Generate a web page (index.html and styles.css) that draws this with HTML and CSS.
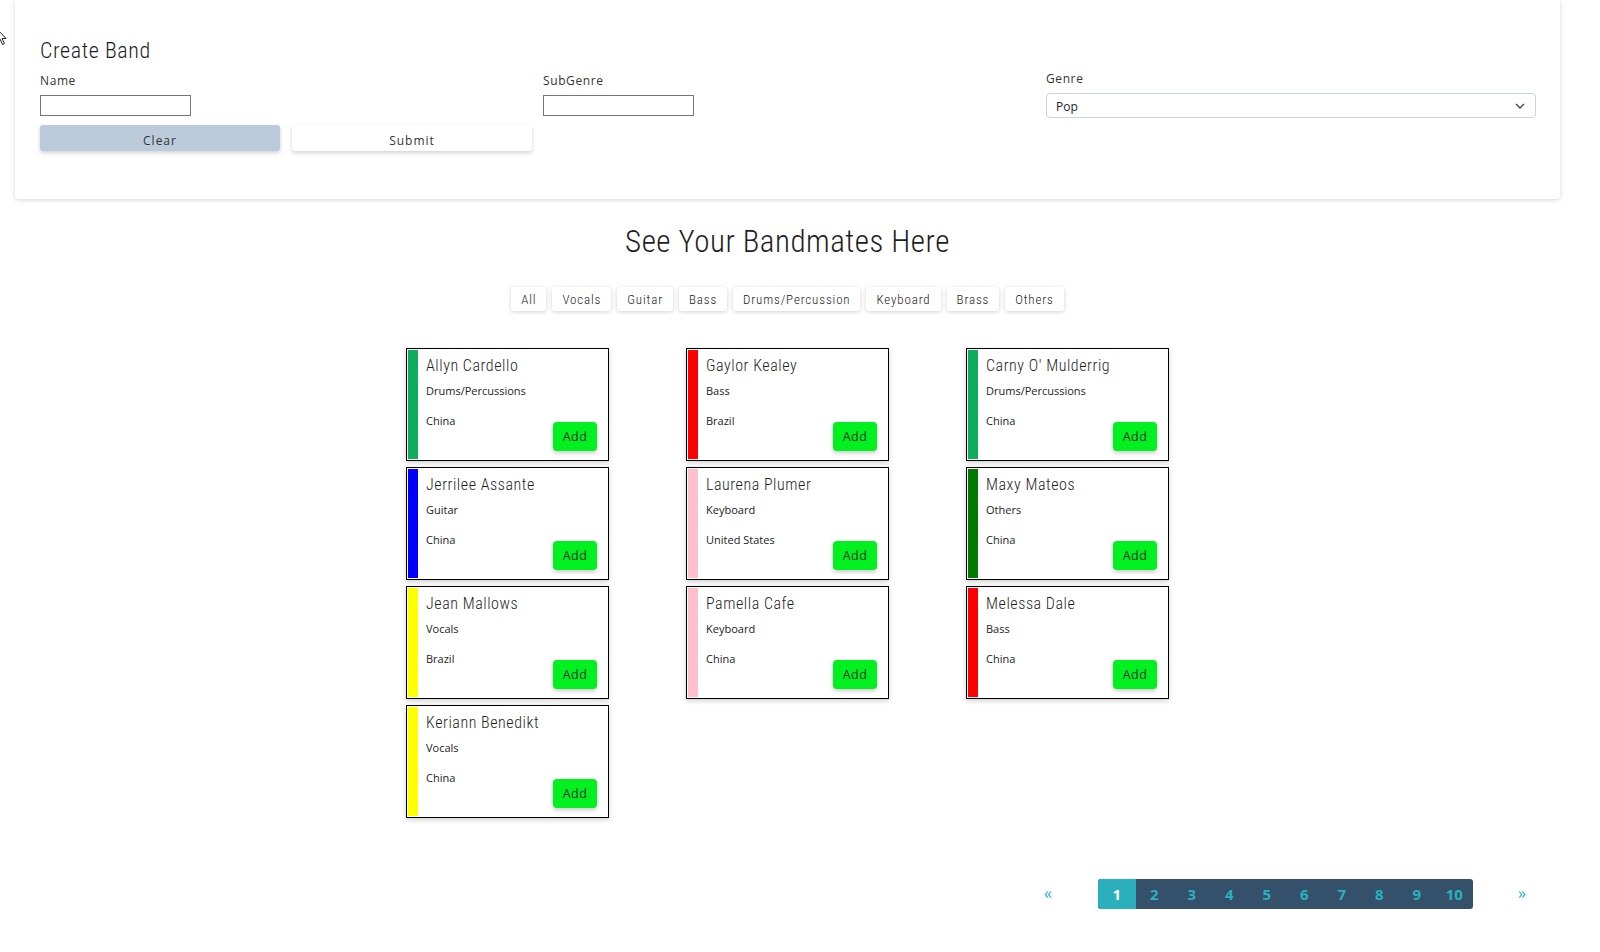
FILE: index.html
```html
<!DOCTYPE html>
<html lang="en">
<head>
<meta charset="utf-8">
<title>Create Band</title>
<link rel="stylesheet" href="styles.css">
</head>
<body>
<svg class="cursor" width="12" height="18" viewBox="0 0 12 18"><path d="M1 1 L1 14 L4 11 L6.5 16.5 L8.5 15.5 L6 10.5 L10 10.5 Z" fill="#fff" stroke="#222" stroke-width="1"/></svg>
<section class="panel">
  <h2 class="panel-title">Create Band</h2>
  <div class="form-grid">
    <div class="field">
      <label class="label">Name</label>
      <input class="text-input" type="text">
      <div class="actions">
        <button class="btn btn-clear">Clear</button>
        <button class="btn btn-submit">Submit</button>
      </div>
    </div>
    <div class="field">
      <label class="label">SubGenre</label>
      <input class="text-input" type="text">
    </div>
    <div class="field field-genre">
      <label class="label">Genre</label>
      <div class="select">
        <span>Pop</span>
        <svg width="10" height="6" viewBox="0 0 10 6"><path d="M1 1 L5 5 L9 1" fill="none" stroke="#444" stroke-width="1.3"/></svg>
      </div>
    </div>
  </div>
</section>

<main class="main">
  <h1 class="heading">See Your Bandmates Here</h1>
  <div class="filters">
    <button class="filter">All</button>
    <button class="filter">Vocals</button>
    <button class="filter">Guitar</button>
    <button class="filter">Bass</button>
    <button class="filter">Drums/Percussion</button>
    <button class="filter">Keyboard</button>
    <button class="filter">Brass</button>
    <button class="filter">Others</button>
  </div>

  <div class="cards">
    <div class="card"><div class="bar c-green"></div><div class="card-body"><div class="name">Allyn Cardello</div><div class="inst">Drums/Percussions</div><div class="bottom"><span class="country">China</span><button class="add">Add</button></div></div></div>
    <div class="card"><div class="bar c-red"></div><div class="card-body"><div class="name">Gaylor Kealey</div><div class="inst">Bass</div><div class="bottom"><span class="country">Brazil</span><button class="add">Add</button></div></div></div>
    <div class="card"><div class="bar c-green"></div><div class="card-body"><div class="name">Carny O' Mulderrig</div><div class="inst">Drums/Percussions</div><div class="bottom"><span class="country">China</span><button class="add">Add</button></div></div></div>

    <div class="card"><div class="bar c-blue"></div><div class="card-body"><div class="name">Jerrilee Assante</div><div class="inst">Guitar</div><div class="bottom"><span class="country">China</span><button class="add">Add</button></div></div></div>
    <div class="card"><div class="bar c-pink"></div><div class="card-body"><div class="name">Laurena Plumer</div><div class="inst">Keyboard</div><div class="bottom"><span class="country">United States</span><button class="add">Add</button></div></div></div>
    <div class="card"><div class="bar c-dkgreen"></div><div class="card-body"><div class="name">Maxy Mateos</div><div class="inst">Others</div><div class="bottom"><span class="country">China</span><button class="add">Add</button></div></div></div>

    <div class="card"><div class="bar c-yellow"></div><div class="card-body"><div class="name">Jean Mallows</div><div class="inst">Vocals</div><div class="bottom"><span class="country">Brazil</span><button class="add">Add</button></div></div></div>
    <div class="card"><div class="bar c-pink"></div><div class="card-body"><div class="name">Pamella Cafe</div><div class="inst">Keyboard</div><div class="bottom"><span class="country">China</span><button class="add">Add</button></div></div></div>
    <div class="card"><div class="bar c-red"></div><div class="card-body"><div class="name">Melessa Dale</div><div class="inst">Bass</div><div class="bottom"><span class="country">China</span><button class="add">Add</button></div></div></div>

    <div class="card"><div class="bar c-yellow"></div><div class="card-body"><div class="name">Keriann Benedikt</div><div class="inst">Vocals</div><div class="bottom"><span class="country">China</span><button class="add">Add</button></div></div></div>
  </div>

  <nav class="pager">
    <span class="pg-arrow">&laquo;</span>
    <div class="pg-box">
      <span class="pg active">1</span>
      <span class="pg">2</span>
      <span class="pg">3</span>
      <span class="pg">4</span>
      <span class="pg">5</span>
      <span class="pg">6</span>
      <span class="pg">7</span>
      <span class="pg">8</span>
      <span class="pg">9</span>
      <span class="pg">10</span>
    </div>
    <span class="pg-arrow">&raquo;</span>
  </nav>
</main>
</body>
</html>
```

FILE: styles.css
```css
* { box-sizing: border-box; }

body {
  margin: 0;
  background: #fff;
  font-family: "Open Sans", "Noto Sans", sans-serif;
  color: #212529;
  position: relative;
}

.cursor {
  position: absolute;
  left: -4px;
  top: 28px;
}

.panel {
  margin: 0 40px 0 15px;
  height: 199px;
  padding: 38px 24px 0 25px;
  background: #fff;
  border-radius: 0 0 4px 4px;
  box-shadow: 0 1px 5px rgba(0, 0, 0, 0.16);
}

.panel-title {
  margin: 0;
  font-family: "Roboto Condensed", "Liberation Sans Narrow", "DejaVu Sans Condensed", sans-serif;
  font-weight: 300;
  font-size: 22px;
  line-height: 26px;
  letter-spacing: 0.6px;
  color: #1e1e1e;
}

.form-grid {
  display: grid;
  grid-template-columns: 503px 503px 490px;
  margin-top: 9px;
  align-items: start;
}

.field {
  display: flex;
  flex-direction: column;
  align-items: flex-start;
}

.field-genre { margin-top: -2px; }

.label {
  font-size: 12px;
  line-height: 16px;
  letter-spacing: 0.6px;
  color: #333;
}

.text-input {
  margin-top: 6px;
  width: 151px;
  height: 21px;
  border: 1px solid #767676;
  border-radius: 0;
  padding: 0 4px;
  background: #fff;
}

.actions {
  margin-top: 9px;
  display: flex;
  gap: 12px;
}

.btn {
  width: 240px;
  height: 26px;
  border: 0;
  border-radius: 3px;
  font-family: "Open Sans", sans-serif;
  font-size: 12px;
  letter-spacing: 1px;
  color: #333;
  padding: 4px 0 0;
  box-shadow: 0 2px 4px rgba(0, 0, 0, 0.18);
}

.btn-clear { background: #bccbdb; }
.btn-submit { background: #fff; }

.select {
  margin-top: 6px;
  width: 490px;
  height: 25px;
  border: 1px solid #ced4da;
  border-radius: 4px;
  display: flex;
  align-items: center;
  justify-content: space-between;
  padding: 1px 10px 0 9px;
  font-size: 12px;
  color: #212529;
}

.main {
  margin: 0 40px 0 15px;
  padding-top: 23px;
  display: flex;
  flex-direction: column;
  align-items: center;
}

.heading {
  margin: 0;
  font-family: "Roboto Condensed", "Liberation Sans Narrow", "DejaVu Sans Condensed", sans-serif;
  font-weight: 300;
  font-size: 31px;
  line-height: 40px;
  letter-spacing: 0.5px;
  color: #1e1e1e;
}

.filters {
  margin-top: 25px;
  display: flex;
  gap: 6px;
}

.filter {
  height: 24px;
  padding: 0 10px;
  border: 0;
  border-radius: 3px;
  background: #fff;
  box-shadow: 0 1px 4px rgba(0, 0, 0, 0.18);
  font-family: "Roboto Condensed", "Liberation Sans Narrow", "DejaVu Sans Condensed", sans-serif;
  font-weight: 300;
  font-size: 13px;
  letter-spacing: 0.85px;
  color: #222;
}

.cards {
  margin-top: 37px;
  display: grid;
  grid-template-columns: repeat(3, 203px);
  column-gap: 77px;
  row-gap: 6px;
}

.card {
  height: 113px;
  border: 1px solid #000;
  padding: 1px;
  display: flex;
  background: #fff;
  box-shadow: 0 2px 5px rgba(0, 0, 0, 0.18);
}

.bar { width: 10px; flex: none; }
.c-green { background: #10ac5e; }
.c-red { background: #ff0000; }
.c-blue { background: #0000ff; }
.c-yellow { background: #ffff00; }
.c-pink { background: #ffc0cb; }
.c-dkgreen { background: #007a00; }

.card-body {
  flex: 1;
  padding: 6px 10px 0 8px;
  display: flex;
  flex-direction: column;
}

.name {
  font-family: "Roboto Condensed", "Liberation Sans Narrow", "DejaVu Sans Condensed", sans-serif;
  font-weight: 300;
  font-size: 16px;
  line-height: 20px;
  letter-spacing: 0.55px;
  color: #1e1e1e;
}

.inst {
  margin-top: 7px;
  font-size: 11px;
  line-height: 16px;
  color: #222;
}

.bottom {
  margin-top: 14px;
  display: flex;
  justify-content: space-between;
  align-items: flex-start;
}

.country {
  font-size: 11px;
  line-height: 16px;
  color: #222;
}

.add {
  margin-top: 9px;
  width: 44px;
  height: 29px;
  border: 0;
  border-radius: 4px;
  background: #00f020;
  box-shadow: 0 2px 4px rgba(0, 0, 0, 0.22);
  font-family: "Open Sans", sans-serif;
  font-size: 12.5px;
  letter-spacing: 0.5px;
  color: #333;
  padding: 0;
}

.pager {
  align-self: stretch;
  margin-top: 61px;
  padding-right: 19px;
  display: flex;
  justify-content: flex-end;
  align-items: center;
}

.pg-arrow {
  width: 38px;
  text-align: center;
  font-size: 16px;
  line-height: 20px;
  padding-bottom: 2px;
  color: #2ab0bd;
}

.pg-arrow:first-child { margin-right: 31px; }
.pg-arrow:last-child { margin-left: 30px; }

.pg-box {
  display: flex;
  height: 30px;
  background: #34506b;
  border-radius: 3px;
  overflow: hidden;
}

.pg {
  width: 37.5px;
  display: flex;
  align-items: center;
  justify-content: center;
  font-weight: 700;
  font-size: 15px;
  color: #2ab0bd;
}

.pg.active {
  background: #2ab0bd;
  color: #fff;
}
```
